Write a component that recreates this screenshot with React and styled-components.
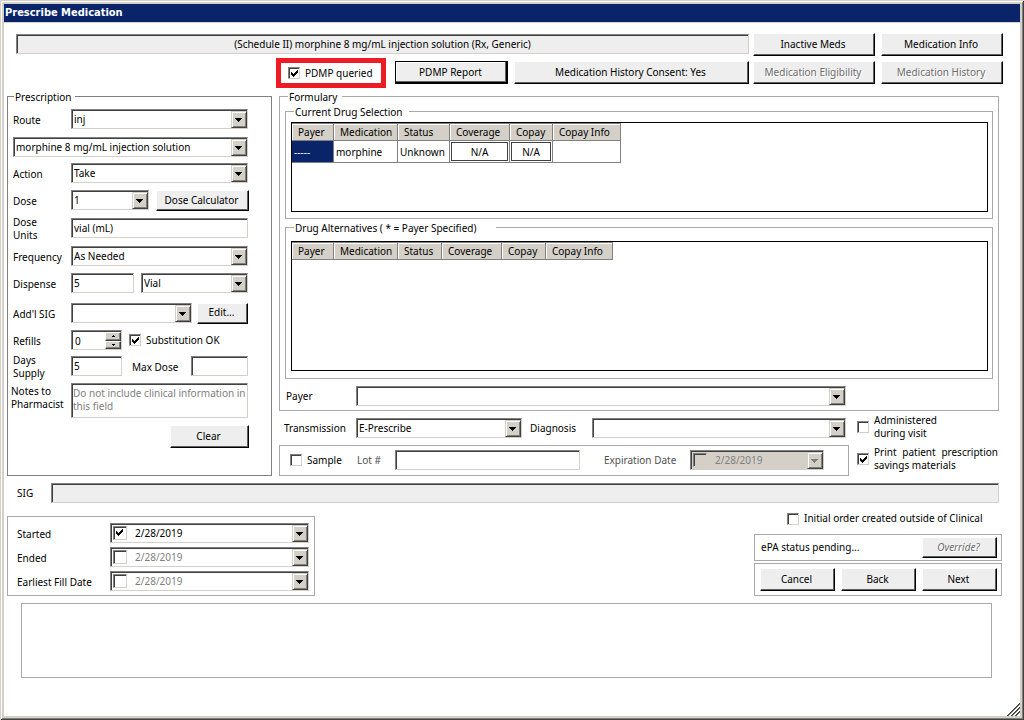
import { useState } from 'react';
import styled, { createGlobalStyle, css } from 'styled-components';

const FACE = '#d4d0c8';
const LINE = '#a9a9a9';

const currentDrugs = [
  { payer: '-----', medication: 'morphine', status: 'Unknown', coverage: 'N/A', copay: 'N/A', info: '' },
];
const currentCols = [42, 64, 52, 60, 43, 68];
const alternativeCols = [42, 64, 44, 60, 44, 67];
const drugHeads = ['Payer', 'Medication', 'Status', 'Coverage', 'Copay', 'Copay Info'];

const DropArrow = ({ disabled }) => (
  <ArrowSpan>
    <svg width="7" height="4" shapeRendering="crispEdges" aria-hidden="true">
      <path d="M0 0h7v1h-1v1h-1v1h-1v1h-1v-1h-1v-1h-1v-1h-1z" fill={disabled ? '#808080' : '#000'} />
    </svg>
  </ArrowSpan>
);

const Select = ({ id, value, label, width }) => (
  <SelectFrame $width={width}>
    <SelectBox id={id} defaultValue={value} aria-label={label}>
      <option>{value}</option>
    </SelectBox>
    <DropArrow />
  </SelectFrame>
);

const Check = ({ id, checked = false, disabled, label, onChange }) => {
  const [on, setOn] = useState(checked);
  const handleChange = e => {
    setOn(e.target.checked);
    if (onChange) onChange(e.target.checked);
  };
  return (
    <CheckSpan>
      <CheckInput
        id={id}
        type="checkbox"
        checked={on}
        disabled={disabled}
        aria-label={label}
        onChange={handleChange}
      />
      {on && (
        <CheckMark width="7" height="7" shapeRendering="crispEdges" aria-hidden="true">
          <path d="M0 2h1v1h1v1h1v-1h1v-1h1v-1h1v-1h1v3h-1v1h-1v1h-1v1h-1v1h-1v-1h-1v-1h-1z" />
        </CheckMark>
      )}
    </CheckSpan>
  );
};

const DateField = ({ id, checked = false, disabled, name, width }) => {
  const [active, setActive] = useState(checked);
  return (
    <DateFrame $width={width} $disabled={disabled}>
      <Check checked={checked} disabled={disabled} label={`Use ${name}`} onChange={setActive} />
      <DateInput id={id} defaultValue="2/28/2019" disabled={disabled} $active={active} />
      <DropArrow disabled={disabled} />
    </DateFrame>
  );
};

const DrugTable = ({ widths, rows, label }) => (
  <Table aria-label={label}>
    <colgroup>
      {widths.map((w, i) => (
        <col key={i} style={{ width: w }} />
      ))}
    </colgroup>
    <thead>
      <tr>
        {drugHeads.map(head => (
          <Th key={head}>{head}</Th>
        ))}
      </tr>
    </thead>
    <tbody>
      {rows.map(row => (
        <tr key={row.medication}>
          <Td $selected>{row.payer}</Td>
          <Td>{row.medication}</Td>
          <Td>{row.status}</Td>
          <ButtonTd>
            <CellButton>{row.coverage}</CellButton>
          </ButtonTd>
          <ButtonTd>
            <CellButton>{row.copay}</CellButton>
          </ButtonTd>
          <Td>{row.info}</Td>
        </tr>
      ))}
    </tbody>
  </Table>
);

const PrescriptionForm = () => {
  const [refills, setRefills] = useState(0);
  return (
    <PrescriptionGroup>
      <Legend>Prescription</Legend>
      <FormRow>
        <FormLabel htmlFor="route">Route</FormLabel>
        <Select id="route" value="inj" />
      </FormRow>
      <FormRow $top={8}>
        <Select value="morphine 8 mg/mL injection solution" label="Medication" />
      </FormRow>
      <FormRow $top={6}>
        <FormLabel htmlFor="action">Action</FormLabel>
        <Select id="action" value="Take" />
      </FormRow>
      <FormRow $top={7}>
        <FormLabel htmlFor="dose">Dose</FormLabel>
        <Select id="dose" value="1" width={78} />
        <DoseButton>Dose Calculator</DoseButton>
      </FormRow>
      <FormRow $top={8}>
        <FormLabel htmlFor="units">
          Dose
          <br />
          Units
        </FormLabel>
        <TextInput id="units" defaultValue="vial (mL)" />
      </FormRow>
      <FormRow $top={8}>
        <FormLabel htmlFor="frequency">Frequency</FormLabel>
        <Select id="frequency" value="As Needed" />
      </FormRow>
      <FormRow $top={7}>
        <FormLabel htmlFor="dispense">Dispense</FormLabel>
        <DispenseInput id="dispense" defaultValue="5" />
        <Select value="Vial" label="Dispense unit" />
      </FormRow>
      <FormRow $top={10}>
        <FormLabel htmlFor="addl">Add'l SIG</FormLabel>
        <Select id="addl" value="" width={121} />
        <EditButton>Edit...</EditButton>
      </FormRow>
      <FormRow $top={7}>
        <FormLabel htmlFor="refills">Refills</FormLabel>
        <SpinFrame>
          <SpinInput
            id="refills"
            value={refills}
            onChange={e => setRefills(Number(e.target.value) || 0)}
          />
          <SpinButtons>
            <SpinButton aria-label="More refills" onClick={() => setRefills(refills + 1)}>
              <svg width="3" height="2" shapeRendering="crispEdges">
                <path d="M1 0h1v1h1v1h-3v-1h1z" />
              </svg>
            </SpinButton>
            <SpinButton aria-label="Fewer refills" onClick={() => setRefills(Math.max(0, refills - 1))}>
              <svg width="3" height="2" shapeRendering="crispEdges">
                <path d="M0 0h3v1h-1v1h-1v-1h-1z" />
              </svg>
            </SpinButton>
          </SpinButtons>
        </SpinFrame>
        <SubstitutionLabel>
          <Check checked />
          Substitution OK
        </SubstitutionLabel>
      </FormRow>
      <FormRow $top={6}>
        <FormLabel htmlFor="days">
          Days
          <br />
          Supply
        </FormLabel>
        <DaysInput id="days" defaultValue="5" />
        <MaxDoseLabel htmlFor="maxdose">Max Dose</MaxDoseLabel>
        <TextInput id="maxdose" />
      </FormRow>
      <NotesRow>
        <FormLabel htmlFor="notes" $wide>
          Notes to
          <br />
          Pharmacist
        </FormLabel>
        <NotesArea id="notes" placeholder="Do not include clinical information in this field" />
      </NotesRow>
      <ClearRow>
        <ClearButton>Clear</ClearButton>
      </ClearRow>
    </PrescriptionGroup>
  );
};

const Formulary = () => (
  <FormularyGroup>
    <Legend $gap={5}>Formulary</Legend>
    <DrugGroup $top={3} $bottom={6}>
      <Legend $gap={6}>Current Drug Selection</Legend>
      <GridBox $height={90}>
        <DrugTable widths={currentCols} rows={currentDrugs} label="Current Drug Selection" />
      </GridBox>
    </DrugGroup>
    <DrugGroup $top={6} $bottom={7}>
      <Legend $gap={20}>Drug Alternatives ( * = Payer Specified)</Legend>
      <GridBox $height={130}>
        <DrugTable widths={alternativeCols} rows={[]} label="Drug Alternatives" />
      </GridBox>
    </DrugGroup>
    <PayerRow>
      <PayerLabel htmlFor="payer">Payer</PayerLabel>
      <Select id="payer" value="" />
    </PayerRow>
  </FormularyGroup>
);

const App = () => {
  return (
    <>
      <GlobalStyle />
      <WindowDiv>
        <TitleBar>Prescribe Medication</TitleBar>
        <TopRow>
          <DrugName readOnly aria-label="Drug" value="(Schedule II) morphine 8 mg/mL injection solution (Rx, Generic)" />
          <TopButtons>
            <TopButton>Inactive Meds</TopButton>
            <TopButton>Medication Info</TopButton>
          </TopButtons>
        </TopRow>
        <ActionRow>
          <PdmpLabel>
            <Check checked />
            PDMP queried
          </PdmpLabel>
          <ActionButtons>
            <ReportButton>PDMP Report</ReportButton>
            <ConsentButton>Medication History Consent: Yes</ConsentButton>
          </ActionButtons>
          <TopButtons $drop>
            <TopButton disabled>Medication Eligibility</TopButton>
            <TopButton disabled>Medication History</TopButton>
          </TopButtons>
        </ActionRow>
        <MainDiv>
          <PrescriptionForm />
          <RightColumn>
            <Formulary />
            <SendDiv>
              <SendFields>
                <SendRow>
                  <SendLabel htmlFor="transmission">Transmission</SendLabel>
                  <Select id="transmission" value="E-Prescribe" width={166} />
                  <DiagnosisLabel htmlFor="diagnosis">Diagnosis</DiagnosisLabel>
                  <Select id="diagnosis" value="" />
                </SendRow>
                <SampleBox>
                  <SampleLabel>
                    <Check />
                    Sample
                  </SampleLabel>
                  <LotLabel htmlFor="lot">Lot #</LotLabel>
                  <TextInput id="lot" />
                  <ExpireLabel htmlFor="expire">Expiration Date</ExpireLabel>
                  <DateField id="expire" name="expiration date" width={134} disabled />
                </SampleBox>
              </SendFields>
              <SendChecks>
                <CheckLabel>
                  <Check />
                  <span>
                    Administered
                    <br />
                    during visit
                  </span>
                </CheckLabel>
                <CheckLabel>
                  <Check checked />
                  <JustifiedSpan>Print patient prescription savings materials</JustifiedSpan>
                </CheckLabel>
              </SendChecks>
            </SendDiv>
          </RightColumn>
        </MainDiv>
        <SigRow>
          <SigLabel htmlFor="sig">SIG</SigLabel>
          <SigInput id="sig" readOnly />
        </SigRow>
        <BottomRow>
          <DatesBox>
            <DateRow>
              <DateLabel htmlFor="started">Started</DateLabel>
              <DateField id="started" name="start date" checked />
            </DateRow>
            <DateRow>
              <DateLabel htmlFor="ended">Ended</DateLabel>
              <DateField id="ended" name="end date" />
            </DateRow>
            <DateRow>
              <DateLabel htmlFor="fill">Earliest Fill Date</DateLabel>
              <DateField id="fill" name="fill date" />
            </DateRow>
          </DatesBox>
          <FinishColumn>
            <OutsideLabel>
              <Check />
              Initial order created outside of Clinical
            </OutsideLabel>
            <StatusBox>
              ePA status pending...
              <OverrideButton disabled>Override?</OverrideButton>
            </StatusBox>
            <NavBox>
              <NavButton>Cancel</NavButton>
              <NavButton>Back</NavButton>
              <NavButton>Next</NavButton>
            </NavBox>
          </FinishColumn>
        </BottomRow>
        <MessageBox />
        <Grip width="13" height="13" aria-hidden="true">
          <path d="M0 13L13 0M4 13L13 4M8 13L13 8" stroke="#404040" strokeWidth="1" />
          <path d="M1 13L13 1M5 13L13 5M9 13L13 9" stroke="#606060" strokeWidth="1" />
        </Grip>
      </WindowDiv>
    </>
  );
};

export default App;

const GlobalStyle = createGlobalStyle`
  * {
    box-sizing: border-box;
  }
  body {
    margin: 0;
    background: #fff;
  }
  body, button, input, select, textarea {
    font-family: Tahoma, 'Noto Sans', sans-serif;
    font-size: 10px;
    line-height: 13px;
    color: #000;
  }
`;

const sunken = css`
  border: 1px solid;
  border-color: #808080 ${FACE} ${FACE} #808080;
  border-radius: 0;
  box-shadow: inset 1px 1px 0 #404040;
  outline: none;
`;

const WindowDiv = styled.div`
  min-height: 100vh;
  display: flex;
  flex-direction: column;
  padding: 4px;
  background: #fff;
  box-shadow:
    inset 1px 1px 0 ${FACE},
    inset -1px -1px 0 #404040,
    inset 2px 2px 0 #fff,
    inset -2px -2px 0 #808080,
    inset 0 0 0 4px ${FACE};
`;
const TitleBar = styled.header`
  height: 19px;
  padding-left: 1px;
  background: #0a246a;
  border-bottom: 1px solid ${FACE};
  color: #fff;
  font-family: Tahoma, 'DejaVu Sans Condensed', sans-serif;
  font-size: 11px;
  font-weight: bold;
  line-height: 18px;
`;

const Button = styled.button`
  flex: none;
  height: 23px;
  padding: 0 2px 1px 0;
  background: #eee;
  border: 1px solid;
  border-color: #fff #000 #000 #fff;
  border-radius: 0;
  box-shadow: inset -1px -1px 0 #606060;
  text-align: center;
  white-space: nowrap;
  &:disabled {
    color: #6d6d6d;
    text-shadow: 1px 1px 0 #fff;
  }
`;
const TopRow = styled.div`
  display: flex;
  gap: 4px;
  padding: 10px 17px 0 12px;
`;
const DrugName = styled.input`
  ${sunken}
  flex: 1;
  min-width: 0;
  height: 20px;
  margin-top: 1px;
  background: #eee;
  text-align: center;
`;
const TopButtons = styled.div`
  display: flex;
  gap: 6px;
  padding-top: ${({ $drop }) => ($drop ? 3 : 0)}px;
`;
const TopButton = styled(Button)`
  width: 122px;
`;
const ActionRow = styled.div`
  display: flex;
  justify-content: flex-end;
  gap: 4px;
  padding: 2px 17px 0 12px;
`;
const PdmpLabel = styled.label`
  display: flex;
  align-items: center;
  gap: 5px;
  width: 110px;
  height: 30px;
  margin-right: 5px;
  padding-left: 7px;
  border: 5px solid #ed1c24;
`;
const ActionButtons = styled.div`
  display: flex;
  gap: 6px;
  padding-top: 3px;
`;
const ReportButton = styled(Button)`
  width: 113px;
  border-color: #000;
  box-shadow: inset -1px -1px 0 #000, inset -2px -2px 0 #606060, inset 1px 1px 0 #fff;
`;
const ConsentButton = styled(Button)`
  width: 235px;
`;

const MainDiv = styled.main`
  display: flex;
  gap: 7px;
  padding: 1px 21px 0 3px;
`;
const Group = styled.fieldset`
  min-width: 0;
  margin: 0;
  border: 1px solid ${LINE};
`;
const Legend = styled.legend`
  margin-left: 1px;
  padding: 2px ${({ $gap = 3 }) => $gap}px 0 1px;
`;
const PrescriptionGroup = styled(Group)`
  flex: none;
  width: 265px;
  padding: 5px 23px 0 5px;
  border-color: #808080;
`;
const FormRow = styled.div`
  display: flex;
  align-items: center;
  height: 20px;
  margin-top: ${({ $top = 0 }) => $top}px;
`;
const FormLabel = styled.label`
  flex: none;
  width: ${({ $wide }) => ($wide ? 60 : 58)}px;
  padding-top: 2px;
  white-space: nowrap;
`;

const SelectFrame = styled.div`
  ${sunken}
  position: relative;
  flex: ${({ $width }) => ($width ? 'none' : 1)};
  width: ${({ $width }) => ($width ? `${$width}px` : 'auto')};
  min-width: 0;
  height: 20px;
`;
const SelectBox = styled.select`
  appearance: none;
  display: block;
  width: 100%;
  height: 18px;
  padding: 0 18px 0 2px;
  background: transparent;
  border: none;
  outline: none;
`;
const ArrowSpan = styled.span`
  position: absolute;
  top: 1px;
  right: 0;
  bottom: 0;
  width: 16px;
  display: flex;
  align-items: center;
  justify-content: center;
  padding-right: 1px;
  background: ${FACE};
  border: 1px solid;
  border-color: ${FACE} #404040 #404040 ${FACE};
  box-shadow: inset 1px 1px 0 #fff, inset -1px -1px 0 #808080;
  pointer-events: none;
`;
const TextInput = styled.input`
  ${sunken}
  flex: 1;
  min-width: 0;
  height: 20px;
  padding: 0 2px;
  background: #fff;
`;
const DispenseInput = styled(TextInput)`
  flex: none;
  width: 63px;
  margin-right: 7px;
`;
const DaysInput = styled(TextInput)`
  flex: none;
  width: 51px;
`;
const DoseButton = styled(Button)`
  width: 93px;
  height: 21px;
  margin: 1px -1px 0 7px;
`;
const EditButton = styled(Button)`
  width: 51px;
  height: 21px;
  margin-left: 5px;
`;
const SpinFrame = styled.div`
  ${sunken}
  display: flex;
  width: 51px;
  height: 20px;
  padding-top: 1px;
`;
const SpinInput = styled.input`
  flex: 1;
  min-width: 0;
  padding: 2px 0 0 3px;
  background: transparent;
  border: none;
  outline: none;
`;
const SpinButtons = styled.div`
  display: flex;
  flex-direction: column;
  width: 16px;
`;
const SpinButton = styled.button`
  display: flex;
  flex: 1;
  align-items: center;
  justify-content: center;
  min-height: 0;
  padding: 0;
  background: ${FACE};
  border: 1px solid;
  border-color: #fff #404040 #404040 #fff;
  box-shadow: inset -1px -1px 0 #808080;
`;
const SubstitutionLabel = styled.label`
  display: flex;
  align-items: center;
  gap: 5px;
  margin-left: 7px;
`;
const MaxDoseLabel = styled.label`
  width: 69px;
  padding: 2px 0 0 10px;
`;
const NotesRow = styled.div`
  display: flex;
  margin: 7px 0 0 -2px;
`;
const NotesArea = styled.textarea`
  ${sunken}
  flex: 1;
  min-width: 0;
  height: 35px;
  padding: 3px 0 0 1px;
  overflow: hidden;
  resize: none;
  &::placeholder {
    color: #808080;
  }
`;
const ClearRow = styled.div`
  display: flex;
  justify-content: flex-end;
  padding: 7px 0 27px;
`;
const ClearButton = styled(Button)`
  width: 79px;
  margin-right: -1px;
`;

const CheckSpan = styled.span`
  position: relative;
  flex: none;
  display: block;
  width: 12px;
  height: 12px;
`;
const CheckInput = styled.input`
  ${sunken}
  appearance: none;
  display: block;
  width: 12px;
  height: 12px;
  margin: 0;
`;
const CheckMark = styled.svg`
  position: absolute;
  top: 3px;
  left: 3px;
  pointer-events: none;
`;

const RightColumn = styled.div`
  flex: 1;
  min-width: 0;
`;
const FormularyGroup = styled(Group)`
  padding: 0 5px 4px;
  & > ${Legend} {
    margin-left: 3px;
  }
`;
const DrugGroup = styled(Group)`
  padding: ${({ $top }) => $top}px 4px ${({ $bottom }) => $bottom}px 5px;
  & + & {
    margin-top: 1px;
  }
  & > ${Legend} {
    margin-left: 3px;
  }
`;
const GridBox = styled.div`
  height: ${({ $height }) => $height}px;
  border: 1px solid #000;
  overflow: auto;
`;
const Table = styled.table`
  table-layout: fixed;
  width: 0;
  border-collapse: separate;
  border-spacing: 0;
`;
const Th = styled.th`
  height: 18px;
  padding: 1px 0 0 6px;
  background: ${FACE};
  border-top: 1px solid #808080;
  border-right: 1px solid #808080;
  border-bottom: 1px solid #808080;
  box-shadow: inset 1px 1px 0 #fff;
  font-weight: normal;
  text-align: left;
  white-space: nowrap;
`;
const Td = styled.td`
  height: 22px;
  padding: 1px 0 0 2px;
  background: ${({ $selected }) => ($selected ? '#0a246a' : '#fff')};
  border-right: 1px solid #808080;
  border-bottom: 1px solid #808080;
  color: ${({ $selected }) => ($selected ? '#fff' : '#000')};
`;
const ButtonTd = styled(Td)`
  padding: 1px;
`;
const CellButton = styled.button`
  display: block;
  width: 100%;
  height: 19px;
  padding: 1px 0 0;
  background: #fff;
  border: 1px solid #404040;
`;
const PayerRow = styled.div`
  display: flex;
  align-items: center;
  margin-top: 7px;
  padding-right: 147px;
`;
const PayerLabel = styled.label`
  width: 71px;
  padding-left: 1px;
`;

const SendDiv = styled.div`
  display: flex;
  gap: 8px;
`;
const SendFields = styled.div`
  flex: 1;
  min-width: 0;
`;
const SendRow = styled.div`
  display: flex;
  align-items: center;
  padding: 7px 3px 7px 5px;
`;
const SendLabel = styled.label`
  width: 72px;
`;
const DiagnosisLabel = styled.label`
  width: 70px;
  padding-left: 8px;
`;
const SampleBox = styled.div`
  display: flex;
  align-items: center;
  height: 31px;
  padding: 0 24px 1px 10px;
  border: 1px solid ${LINE};
`;
const SampleLabel = styled.label`
  display: flex;
  align-items: center;
  gap: 5px;
  width: 67px;
`;
const LotLabel = styled.label`
  width: 38px;
  color: #505050;
`;
const ExpireLabel = styled.label`
  width: 110px;
  padding-left: 24px;
  color: #505050;
  white-space: nowrap;
`;
const SendChecks = styled.div`
  display: flex;
  flex-direction: column;
  gap: 6px;
  width: 142px;
  padding-top: 3px;
`;
const CheckLabel = styled.label`
  display: flex;
  align-items: center;
  gap: 5px;
`;
const JustifiedSpan = styled.span`
  width: 124px;
  text-align: justify;
`;

const DateFrame = styled.div`
  ${sunken}
  position: relative;
  display: flex;
  align-items: center;
  flex: ${({ $width }) => ($width ? 'none' : 1)};
  width: ${({ $width }) => ($width ? `${$width}px` : 'auto')};
  height: 20px;
  padding-left: 2px;
  background: ${({ $disabled }) => ($disabled ? FACE : '#fff')};
  ${CheckSpan}, ${CheckInput} {
    width: 14px;
    height: 14px;
  }
`;
const DateInput = styled.input`
  flex: 1;
  min-width: 0;
  padding: 1px 18px 0 8px;
  background: transparent;
  border: none;
  outline: none;
  color: ${({ $active }) => ($active ? '#000' : '#808080')};
`;

const SigRow = styled.div`
  display: flex;
  align-items: center;
  padding: 7px 21px 0 13px;
`;
const SigLabel = styled.label`
  width: 34px;
`;
const SigInput = styled(TextInput)`
  background: #eee;
`;
const BottomRow = styled.div`
  display: flex;
  justify-content: space-between;
  align-items: flex-end;
  padding: 9px 18px 0 3px;
`;
const DatesBox = styled.div`
  display: flex;
  flex-direction: column;
  gap: 4px;
  width: 308px;
  padding: 6px 5px 4px 9px;
  border: 1px solid ${LINE};
`;
const DateRow = styled.div`
  display: flex;
  align-items: center;
`;
const DateLabel = styled.label`
  width: 93px;
  padding-top: 2px;
`;
const FinishColumn = styled.div`
  width: 248px;
`;
const OutsideLabel = styled.label`
  display: flex;
  align-items: center;
  gap: 5px;
  height: 13px;
  margin-bottom: 9px;
  padding-left: 33px;
  white-space: nowrap;
`;
const StatusBox = styled.div`
  display: flex;
  align-items: center;
  justify-content: space-between;
  height: 27px;
  padding: 0 4px 0 6px;
  border: 1px solid ${LINE};
`;
const NavBox = styled.div`
  display: flex;
  align-items: center;
  justify-content: space-between;
  height: 33px;
  margin-top: 2px;
  padding: 0 4px 0 5px;
  border: 1px solid ${LINE};
`;
const NavButton = styled(Button)`
  width: 75px;
`;
const OverrideButton = styled(NavButton)`
  height: 21px;
  font-style: italic;
`;
const MessageBox = styled.div`
  height: 75px;
  margin: 7px 28px 0 17px;
  border: 1px solid ${LINE};
`;
const Grip = styled.svg`
  flex: none;
  align-self: flex-end;
  margin-top: auto;
`;
